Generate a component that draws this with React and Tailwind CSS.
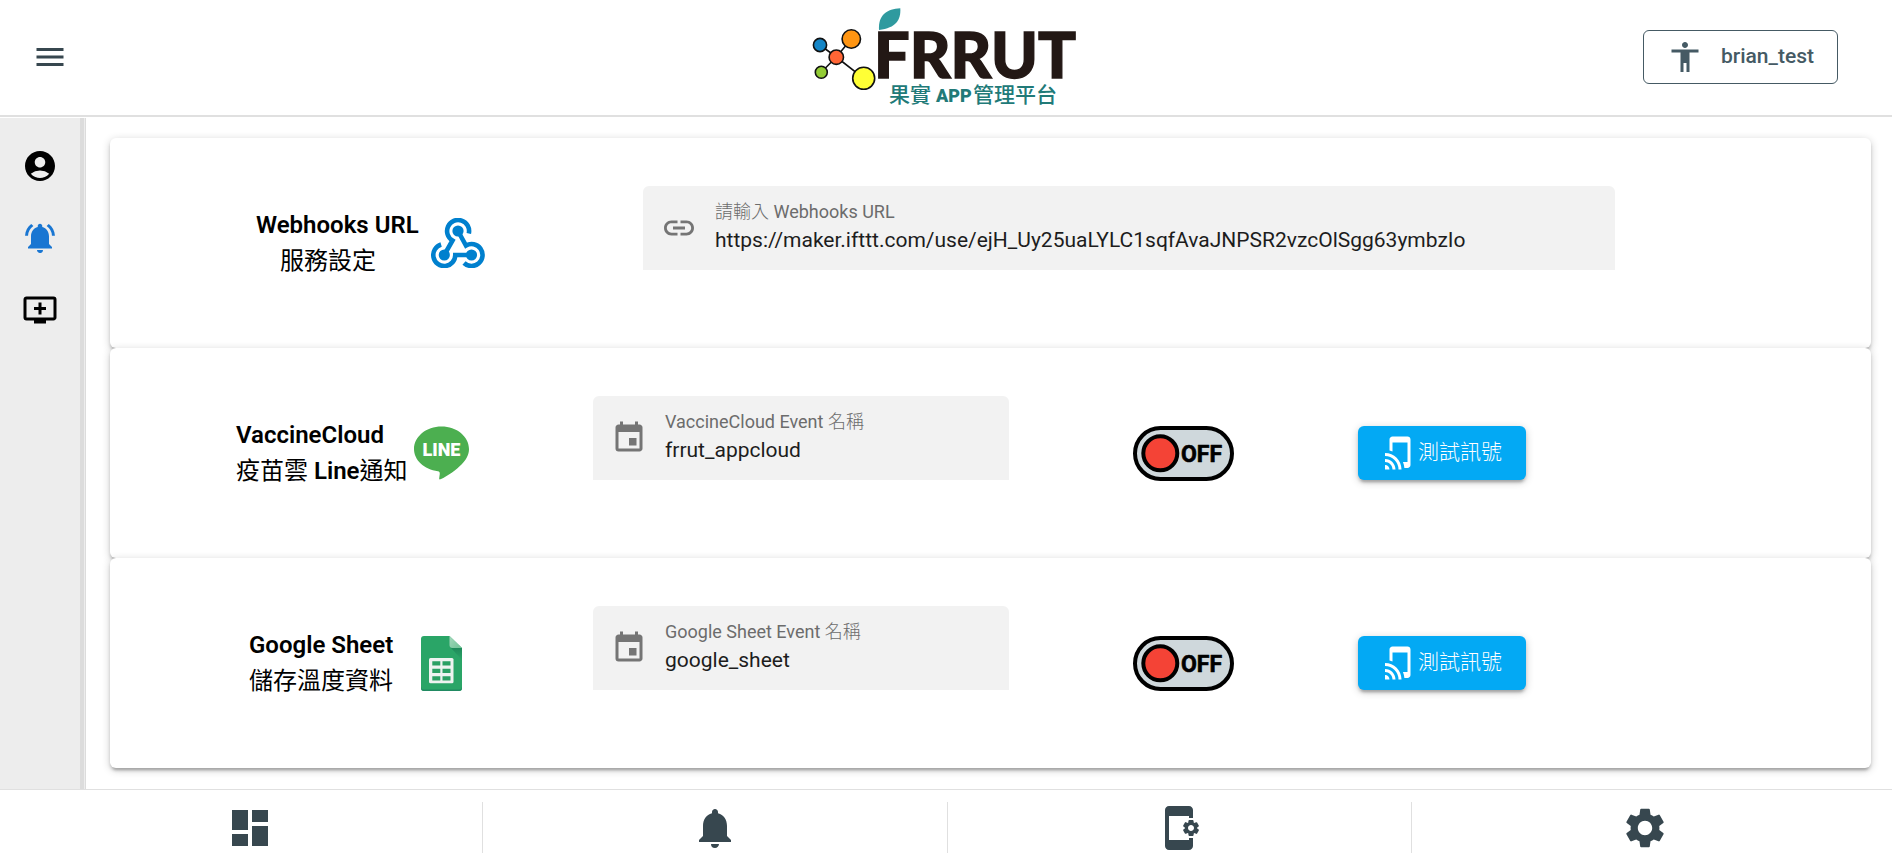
import {
  MdMenu,
  MdAccessibility,
  MdAccountCircle,
  MdNotificationsActive,
  MdAddToQueue,
  MdLink,
  MdEvent,
  MdTapAndPlay,
  MdDashboard,
  MdNotifications,
  MdAppSettingsAlt,
  MdSettings,
} from "react-icons/md";

function Logo() {
  return (
    <svg className="h-[110px] w-[276px]" viewBox="0 2 276 110" role="img">
      <g stroke="#111" strokeWidth="1.6">
        <path d="M12 45 28.3 57M43.3 39 28.3 57M13.3 72.3 28.3 57M55.7 78.3 28.3 57" />
        <circle cx="12" cy="45" r="6.6" fill="#1485c6" />
        <circle cx="43.3" cy="39" r="9.2" fill="#ff9512" />
        <circle cx="28.3" cy="57.2" r="7.2" fill="#ff6535" />
        <circle cx="13.3" cy="72.3" r="6" fill="#93cc35" />
        <circle cx="55.7" cy="78.3" r="11" fill="#ffff35" />
      </g>
      <path d="M71 30C70 15 79 9 92.3 8.3C93 20 88 28 71 30Z" fill="#2f9a9f" />
      <text
        x="66"
        y="78"
        fill="#231815"
        stroke="#231815"
        strokeWidth="1.4"
        fontFamily="Lato, sans-serif"
        fontWeight="900"
        fontSize="63"
      >
        FRRUT
      </text>
      <g fill="#217a78" fontFamily="'Noto Sans CJK TC', sans-serif" fontWeight="500" fontSize="21">
        <text x="81" y="102">果實</text>
        <text x="128" y="102" fontFamily="Roboto, sans-serif" fontWeight="900" fontSize="18">
          APP
        </text>
        <text x="165" y="102">管理平台</text>
      </g>
    </svg>
  );
}

function WebhookIcon() {
  return (
    <svg className="h-[50px] w-[54px]" viewBox="0 0 54 50" fill="none" stroke="#0080ce" strokeWidth="4.6">
      <path d="M13.3 37 21.5 22.5A11 11 0 1 1 37.8 15.5" />
      <path d="M27 13 35 27.5A11 11 0 1 1 33 45" />
      <path d="M40.5 37H24.3A11 11 0 1 1 10.1 26.5" />
      <g fill="#0080ce" stroke="none">
        <circle cx="27" cy="13" r="5.6" />
        <circle cx="13.3" cy="37" r="5.6" />
        <circle cx="40.5" cy="37" r="5.6" />
      </g>
    </svg>
  );
}

function LineIcon() {
  return (
    <svg className="h-[54px] w-[55px]" viewBox="0 0 55 54">
      <path
        d="M27.5 0.5C42.7 0.5 55 10.5 55 23C55 29 52 34 47.5 38.5C42 44 34 50 26.5 53.3C25.2 53.7 25 53 25.3 51.5C25.8 48 26.5 46 24 45.3C10 43.5 0 34 0 23C0 10.5 12.3 0.5 27.5 0.5Z"
        fill="#4caf50"
      />
      <text
        x="27.5"
        y="30"
        textAnchor="middle"
        fill="#fff"
        fontFamily="Roboto, sans-serif"
        fontWeight="900"
        fontSize="18"
      >
        LINE
      </text>
    </svg>
  );
}

function SheetIcon() {
  return (
    <svg className="h-[55px] w-[41px]" viewBox="0 0 41 55">
      <defs>
        <linearGradient id="fold" x1="0" y1="0" x2="1" y2="1">
          <stop offset="0" stopColor="#a5d9bd" />
          <stop offset="1" stopColor="#6fc295" />
        </linearGradient>
        <linearGradient id="shade" x1="0" y1="0" x2="0" y2="1">
          <stop offset="0" stopColor="#1f8a5a" />
          <stop offset="1" stopColor="#2aa567" />
        </linearGradient>
      </defs>
      <path d="M3 0H28.5L41 12V52a3 3 0 0 1-3 3H3a3 3 0 0 1-3-3V3a3 3 0 0 1 3-3Z" fill="#2aa567" />
      <path d="M0 51v1a3 3 0 0 0 3 3h35a3 3 0 0 0 3-3v-1a3 3 0 0 1-3 2.5H3A3 3 0 0 1 0 51Z" fill="#218a62" />
      <path d="M30 12H41V24Z" fill="url(#shade)" />
      <path d="M28.5 0 41 12H31.5a3 3 0 0 1-3-3Z" fill="url(#fold)" />
      <rect x="8" y="22" width="24.5" height="25.3" rx="1.5" fill="#eef3f0" />
      <path
        d="M11.3 25.2h8v4.3h-8zM21.5 25.2h8v4.3h-8zM11.3 32.7h8v4.3h-8zM21.5 32.7h8v4.3h-8zM11.3 40.2h8v4.3h-8zM21.5 40.2h8v4.3h-8z"
        fill="#2aa063"
      />
    </svg>
  );
}

function OffSwitch({ label }) {
  return (
    <button type="button" role="switch" aria-checked="false" aria-label={label}>
      <svg className="block h-[55px] w-[101px]" viewBox="0 0 101 55">
        <rect x="2" y="2" width="97" height="51" rx="25.5" fill="#cfd8dc" stroke="#000" strokeWidth="4" />
        <circle cx="27.3" cy="27.3" r="17" fill="#f44336" stroke="#000" strokeWidth="4" />
        <text
          x="48"
          y="36"
          fontFamily="Roboto, sans-serif"
          fontWeight="700"
          fontSize="23"
          stroke="#000"
          strokeWidth="0.6"
          strokeLinejoin="round"
        >
          OFF
        </text>
      </svg>
    </button>
  );
}

function Field({ id, label, value, icon: Icon }) {
  return (
    <div className="pb-[30px]">
      <div className="flex h-[84px] items-center gap-[18px] rounded-t-md bg-[#f2f2f2] px-[18px]">
        <Icon className="size-9 shrink-0 text-[#757575]" />
        <div className="flex min-w-0 flex-1 flex-col">
          <label htmlFor={id} className="text-[18px] leading-6 text-[#6c6c6c]">
            {label}
          </label>
          <input
            id={id}
            type="text"
            defaultValue={value}
            className="h-8 w-full bg-transparent text-[21px] text-[#1d1d1d] outline-none"
          />
        </div>
      </div>
    </div>
  );
}

function Card({ columns, children }) {
  return (
    <section
      className={`grid min-h-[210px] items-center rounded-md bg-white shadow-[0_2px_8px_rgba(0,0,0,0.2),0_3px_3px_rgba(0,0,0,0.14),0_5px_2px_-3px_rgba(0,0,0,0.12)] ${columns}`}
    >
      {children}
    </section>
  );
}

const heading = "text-[24px] leading-9 font-semibold whitespace-nowrap text-black";

function EventCard({ title, id, fieldLabel, value }) {
  return (
    <Card columns="grid-cols-[483fr_416fr_349fr_513fr]">
      {title}
      <Field id={id} label={fieldLabel} value={value} icon={MdEvent} />
      <div className="flex justify-center">
        <OffSwitch label={value} />
      </div>
      <div>
        <button
          type="button"
          className="flex h-[54px] items-center rounded-md bg-[#03a9f4] px-6 text-[21px] font-light text-white shadow-[0_2px_8px_rgba(0,0,0,0.2),0_3px_3px_rgba(0,0,0,0.14),0_5px_2px_-3px_rgba(0,0,0,0.12)]"
        >
          <MdTapAndPlay className="size-9" />
          測試訊號
        </button>
      </div>
    </Card>
  );
}

const sideItems = [
  { name: "account", icon: MdAccountCircle, color: "text-black" },
  { name: "notifications", icon: MdNotificationsActive, color: "text-[#1976d2]" },
  { name: "add device", icon: MdAddToQueue, color: "text-black" },
];

const tabs = [
  { name: "dashboard", icon: MdDashboard },
  { name: "alerts", icon: MdNotifications },
  { name: "app settings", icon: MdAppSettingsAlt },
  { name: "settings", icon: MdSettings },
];

export default function App() {
  return (
    <div className="flex min-h-screen flex-col bg-white font-[Roboto,'Noto_Sans_CJK_TC',sans-serif]">
      <header className="grid h-[117px] grid-cols-[1fr_auto_1fr] items-center border-b-2 border-[#e0e0e0] pb-px">
        <div className="pl-8">
          <button type="button" aria-label="menu" className="block text-[#37474f]">
            <MdMenu className="size-9" />
          </button>
        </div>
        <Logo />
        <div className="flex justify-end pr-[54px]">
          <button
            type="button"
            className="flex h-[54px] items-center gap-[18px] rounded-md border border-[#455a64] px-[23px] text-[21px] font-medium text-[#455a64]"
          >
            <MdAccessibility className="size-9" />
            brian_test
          </button>
        </div>
      </header>

      <div className="flex flex-1 pt-px">
        <aside className="flex border-r border-[#dcdcdc] bg-[#ededed] pr-px">
          <nav className="flex w-[84px] flex-col border-r-4 border-[#dcdcdc] pt-3">
            {sideItems.map(({ name, icon: Icon, color }) => (
              <a key={name} href="#" aria-label={name} className={`flex h-[72px] items-center justify-center ${color}`}>
                <Icon className="size-9" />
              </a>
            ))}
          </nav>
        </aside>

        <main className="min-w-0 flex-1 pt-5 pr-[21px] pb-[21px] pl-6">
          <Card columns="grid-cols-[533fr_972fr_256fr]">
            <div className="flex items-center gap-3 pl-[146px]">
              <h2 className={heading}>
                Webhooks URL
                <span className="block pl-6 font-normal">服務設定</span>
              </h2>
              <WebhookIcon />
            </div>
            <Field
              id="webhook"
              label={
                <>
                  <span className="font-light">請輸入</span> Webhooks URL
                </>
              }
              value="https://maker.ifttt.com/use/ejH_Uy25uaLYLC1sqfAvaJNPSR2vzcOlSgg63ymbzIo"
              icon={MdLink}
            />
          </Card>

          <EventCard
            id="line-event"
            title={
              <div className="flex items-center gap-[6px] pl-[126px]">
                <h2 className={heading}>
                  VaccineCloud
                  <span className="block">
                    <span className="font-normal">疫苗雲</span> Line<span className="font-normal">通知</span>
                  </span>
                </h2>
                <LineIcon />
              </div>
            }
            fieldLabel={
              <>
                VaccineCloud Event <span className="font-light">名稱</span>
              </>
            }
            value="frrut_appcloud"
          />

          <EventCard
            id="sheet-event"
            title={
              <div className="flex items-center gap-7 pl-[139px]">
                <h2 className={heading}>
                  Google Sheet
                  <span className="block font-normal">儲存溫度資料</span>
                </h2>
                <SheetIcon />
              </div>
            }
            fieldLabel={
              <>
                Google Sheet Event <span className="font-light">名稱</span>
              </>
            }
            value="google_sheet"
          />
        </main>
      </div>

      <footer className="border-t border-[#e0e0e0] pt-3 pr-[15px] pb-[7px] pl-[18px]">
        <nav className="grid grid-cols-4 divide-x divide-[#e0e0e0]">
          {tabs.map(({ name, icon: Icon }) => (
            <a key={name} href="#" aria-label={name} className="flex h-[51px] items-center justify-center text-[#37474f]">
              <Icon className="size-12" />
            </a>
          ))}
        </nav>
      </footer>
    </div>
  );
}
